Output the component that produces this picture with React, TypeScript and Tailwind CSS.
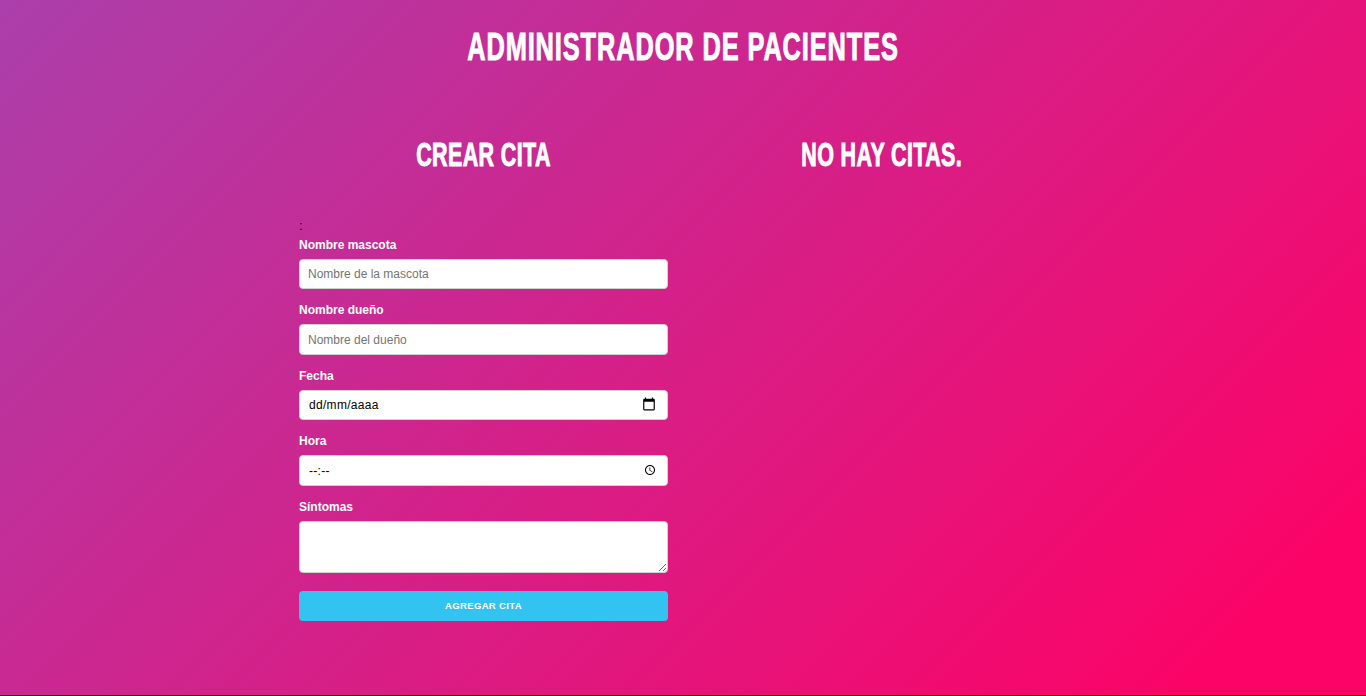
import React from "react";

const heading = "font-['Liberation_Sans',sans-serif] font-bold uppercase text-white text-center";
const squeezed = "inline-block whitespace-nowrap scale-x-[.65] [-webkit-text-stroke:1px_white]";
const labelClass = "block font-bold text-[12px] leading-[15px] text-white mb-[6px]";
const inputClass =
  "block w-full h-[30.5px] bg-white border border-[#d1d1d1] rounded-[4px] px-[8px] text-[12px] text-black placeholder:text-[#757575] outline-none";

function CalendarIcon() {
  return (
    <svg viewBox="0 0 24 24" className="absolute right-[12px] top-[7px] w-[14px] h-[14px]" fill="#000">
      <path d="M20 3h-1V1h-2v2H7V1H5v2H4c-1.1 0-2 .9-2 2v16c0 1.1.9 2 2 2h16c1.1 0 2-.9 2-2V5c0-1.1-.9-2-2-2zm0 18H4V8h16v13z" />
    </svg>
  );
}

function ClockIcon() {
  return (
    <svg viewBox="0 0 24 24" className="absolute right-[12px] top-[9px] w-[12px] h-[12px]" fill="#000">
      <path d="M11.99 2C6.47 2 2 6.48 2 12s4.47 10 9.99 10C17.52 22 22 17.52 22 12S17.52 2 11.99 2zM12 20c-4.42 0-8-3.58-8-8s3.58-8 8-8 8 3.58 8 8-3.58 8-8 8zm.5-13H11v6l5.25 3.15.75-1.23-4.5-2.67z" />
    </svg>
  );
}

function Field({ label, children }: { label: string; children: React.ReactNode }) {
  return (
    <div className="mb-[14px]">
      <label className={labelClass}>{label}</label>
      {children}
    </div>
  );
}

function PickerInput({ value, icon }: { value: string; icon: React.ReactNode }) {
  return (
    <div className="relative">
      <input className={`${inputClass} pl-[9px] tracking-[0.3px]`} type="text" value={value} readOnly />
      {icon}
    </div>
  );
}

export default function App() {
  return (
    <div className="min-h-[696px] border-b border-black bg-[linear-gradient(135deg,#ab3fab_0%,#fc0367_92%)] font-['Liberation_Sans',Arial,sans-serif]">
      <h1 className={`${heading} text-[39px] leading-[44px] pt-[25px]`}>
        <span className={`${squeezed} tracking-[1.4px]`}>Administrador de pacientes</span>
      </h1>
      <div className="mx-auto w-[800px] grid grid-cols-[401px_399px] mt-[66px]">
        <div className="px-4">
          <h2 className={`${heading} text-[33px] leading-[40px]`}>
            <span className={`${squeezed} tracking-[0.6px]`}>Crear cita</span>
          </h2>
          <form className="mt-[42.8px]">
            <div className="text-[13px] leading-[15px] text-black h-[20px]">:</div>
            <Field label="Nombre mascota">
              <input className={inputClass} type="text" placeholder="Nombre de la mascota" />
            </Field>
            <Field label="Nombre dueño">
              <input className={inputClass} type="text" placeholder="Nombre del dueño" />
            </Field>
            <Field label="Fecha">
              <PickerInput value="dd/mm/aaaa" icon={<CalendarIcon />} />
            </Field>
            <Field label="Hora">
              <PickerInput value="--:--" icon={<ClockIcon />} />
            </Field>
            <div className="mb-[18px]">
              <label className={labelClass}>Síntomas</label>
              <textarea className="block w-full h-[52px] bg-white border border-[#d1d1d1] rounded-[4px] outline-none" />
            </div>
            <button type="button" className="block w-full h-[30px] bg-[#33c3f0] rounded-[4px] text-white text-[9.5px] font-bold uppercase tracking-[0.35px]">
              Agregar cita
            </button>
          </form>
        </div>
        <div className="pr-[3px]">
          <h2 className={`${heading} text-[33px] leading-[40px]`}>
            <span className={`${squeezed} tracking-[0.6px]`}>No hay citas.</span>
          </h2>
        </div>
      </div>
    </div>
  );
}
